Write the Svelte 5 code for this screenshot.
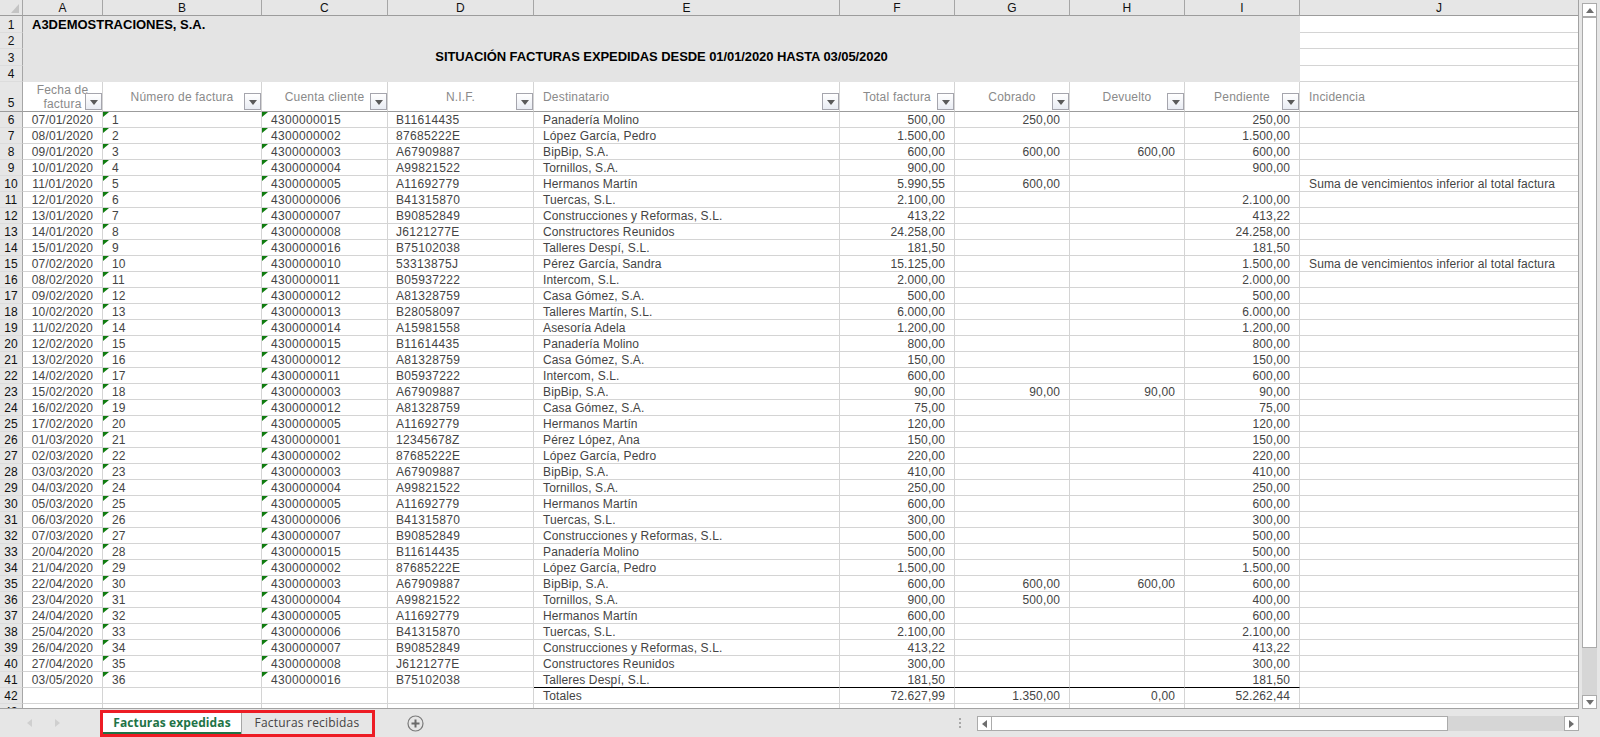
<script>
  const cols = ["A", "B", "C", "D", "E", "F", "G", "H", "I", "J"];
  const widths = [80, 159, 126, 146, 306, 115, 115, 115, 115, 278];
  const aviso = "Suma de vencimientos inferior al total factura";

  // cliente: cuenta, nif, nombre
  const c = {
    molino: ["4300000015", "B11614435", "Panadería Molino"],
    lopez: ["4300000002", "87685222E", "López García, Pedro"],
    bipbip: ["4300000003", "A67909887", "BipBip, S.A."],
    tornillos: ["4300000004", "A99821522", "Tornillos, S.A."],
    hermanos: ["4300000005", "A11692779", "Hermanos Martín"],
    tuercas: ["4300000006", "B41315870", "Tuercas, S.L."],
    reformas: ["4300000007", "B90852849", "Construcciones y Reformas, S.L."],
    reunidos: ["4300000008", "J6121277E", "Constructores Reunidos"],
    despi: ["4300000016", "B75102038", "Talleres Despí, S.L."],
    sandra: ["4300000010", "53313875J", "Pérez García, Sandra"],
    intercom: ["4300000011", "B05937222", "Intercom, S.L."],
    gomez: ["4300000012", "A81328759", "Casa Gómez, S.A."],
    martin: ["4300000013", "B28058097", "Talleres Martín, S.L."],
    adela: ["4300000014", "A15981558", "Asesoría Adela"],
    ana: ["4300000001", "12345678Z", "Pérez López, Ana"],
  };

  // fecha, cliente, total, cobrado, devuelto, pendiente, incidencia
  const facturas = [
    ["07/01/2020", c.molino, "500,00", "250,00", "", "250,00"],
    ["08/01/2020", c.lopez, "1.500,00", "", "", "1.500,00"],
    ["09/01/2020", c.bipbip, "600,00", "600,00", "600,00", "600,00"],
    ["10/01/2020", c.tornillos, "900,00", "", "", "900,00"],
    ["11/01/2020", c.hermanos, "5.990,55", "600,00", "", "", aviso],
    ["12/01/2020", c.tuercas, "2.100,00", "", "", "2.100,00"],
    ["13/01/2020", c.reformas, "413,22", "", "", "413,22"],
    ["14/01/2020", c.reunidos, "24.258,00", "", "", "24.258,00"],
    ["15/01/2020", c.despi, "181,50", "", "", "181,50"],
    ["07/02/2020", c.sandra, "15.125,00", "", "", "1.500,00", aviso],
    ["08/02/2020", c.intercom, "2.000,00", "", "", "2.000,00"],
    ["09/02/2020", c.gomez, "500,00", "", "", "500,00"],
    ["10/02/2020", c.martin, "6.000,00", "", "", "6.000,00"],
    ["11/02/2020", c.adela, "1.200,00", "", "", "1.200,00"],
    ["12/02/2020", c.molino, "800,00", "", "", "800,00"],
    ["13/02/2020", c.gomez, "150,00", "", "", "150,00"],
    ["14/02/2020", c.intercom, "600,00", "", "", "600,00"],
    ["15/02/2020", c.bipbip, "90,00", "90,00", "90,00", "90,00"],
    ["16/02/2020", c.gomez, "75,00", "", "", "75,00"],
    ["17/02/2020", c.hermanos, "120,00", "", "", "120,00"],
    ["01/03/2020", c.ana, "150,00", "", "", "150,00"],
    ["02/03/2020", c.lopez, "220,00", "", "", "220,00"],
    ["03/03/2020", c.bipbip, "410,00", "", "", "410,00"],
    ["04/03/2020", c.tornillos, "250,00", "", "", "250,00"],
    ["05/03/2020", c.hermanos, "600,00", "", "", "600,00"],
    ["06/03/2020", c.tuercas, "300,00", "", "", "300,00"],
    ["07/03/2020", c.reformas, "500,00", "", "", "500,00"],
    ["20/04/2020", c.molino, "500,00", "", "", "500,00"],
    ["21/04/2020", c.lopez, "1.500,00", "", "", "1.500,00"],
    ["22/04/2020", c.bipbip, "600,00", "600,00", "600,00", "600,00"],
    ["23/04/2020", c.tornillos, "900,00", "500,00", "", "400,00"],
    ["24/04/2020", c.hermanos, "600,00", "", "", "600,00"],
    ["25/04/2020", c.tuercas, "2.100,00", "", "", "2.100,00"],
    ["26/04/2020", c.reformas, "413,22", "", "", "413,22"],
    ["27/04/2020", c.reunidos, "300,00", "", "", "300,00"],
    ["03/05/2020", c.despi, "181,50", "", "", "181,50"],
  ];
</script>

{#snippet filtro()}
  <span class="filter"><svg width="8" height="5" viewBox="0 0 8 5"><path d="M0 0h8L4 5z" fill="#5a5a5a" /></svg></span>
{/snippet}

<div class="excel">
  <div class="main">
    <div class="sheet">
      <table>
        <colgroup>
          <col style="width:23px" />
          {#each widths as w}
            <col style="width:{w}px" />
          {/each}
        </colgroup>
        <thead>
          <tr>
            <th class="corner"><svg width="23" height="15" viewBox="0 0 23 15"><path d="M19 4v9h-8z" fill="#c4c4c4" /></svg></th>
            {#each cols as col}
              <th>{col}</th>
            {/each}
          </tr>
        </thead>
        <tbody>
          <tr class="r17">
            <th class="rh">1</th>
            <td colspan="9" class="banner empresa">A3DEMOSTRACIONES, S.A.</td>
            <td></td>
          </tr>
          <tr>
            <th class="rh">2</th>
            <td colspan="9" class="banner"></td>
            <td></td>
          </tr>
          <tr class="r17">
            <th class="rh">3</th>
            <td colspan="9" class="banner titulo">SITUACIÓN FACTURAS EXPEDIDAS DESDE 01/01/2020 HASTA 03/05/2020</td>
            <td></td>
          </tr>
          <tr>
            <th class="rh">4</th>
            <td colspan="9" class="banner"></td>
            <td></td>
          </tr>
          <tr class="cabecera">
            <th class="rh bottom">5</th>
            <td class="center">Fecha de<br />factura{@render filtro()}</td>
            <td class="center">Número de factura{@render filtro()}</td>
            <td class="center">Cuenta cliente{@render filtro()}</td>
            <td class="center">N.I.F.{@render filtro()}</td>
            <td class="left">Destinatario{@render filtro()}</td>
            <td class="center">Total factura{@render filtro()}</td>
            <td class="center">Cobrado{@render filtro()}</td>
            <td class="center">Devuelto{@render filtro()}</td>
            <td class="center">Pendiente{@render filtro()}</td>
            <td class="left">Incidencia</td>
          </tr>
          {#each facturas as f, i}
            {@const last = i === facturas.length - 1}
            <tr>
              <th class="rh">{i + 6}</th>
              <td class="center">{f[0]}</td>
              <td class="left mark">{i + 1}</td>
              <td class="left mark digits">{f[1][0]}</td>
              <td class="left digits nif">{f[1][1]}</td>
              <td class="left" class:line={last}>{f[1][2]}</td>
              <td class="right" class:line={last}>{f[2]}</td>
              <td class="right" class:line={last}>{f[3]}</td>
              <td class="right" class:line={last}>{f[4]}</td>
              <td class="right" class:line={last}>{f[5]}</td>
              <td class="left">{f[6] ?? ""}</td>
            </tr>
          {/each}
          <tr>
            <th class="rh">42</th>
            <td></td><td></td><td></td><td></td>
            <td class="left">Totales</td>
            <td class="right">72.627,99</td>
            <td class="right">1.350,00</td>
            <td class="right">0,00</td>
            <td class="right">52.262,44</td>
            <td></td>
          </tr>
          <tr>
            <th class="rh">43</th>
            {#each cols as _}
              <td></td>
            {/each}
          </tr>
        </tbody>
      </table>
    </div>

    <div class="vscroll">
      <div class="btn up"><svg width="8" height="5" viewBox="0 0 8 5"><path d="M4 0l4 5H0z" fill="#6e6e6e" /></svg></div>
      <div class="track">
        <div class="thumb"></div>
      </div>
      <div class="btn down"><svg width="8" height="5" viewBox="0 0 8 5"><path d="M0 0h8L4 5z" fill="#6e6e6e" /></svg></div>
    </div>
  </div>

  <div class="bar">
    <div class="nav">
      <svg width="5" height="8" viewBox="0 0 5 8"><path d="M5 0v8L0 4z" fill="#cfcfcf" /></svg>
      <svg width="5" height="8" viewBox="0 0 5 8"><path d="M0 0v8l5-4z" fill="#cfcfcf" /></svg>
    </div>
    <div class="tabs">
      <div class="tab active">Facturas expedidas</div>
      <div class="tab">Facturas recibidas</div>
    </div>
    <svg class="add" width="17" height="17" viewBox="0 0 17 17">
      <circle cx="8.5" cy="8.5" r="7.5" fill="none" stroke="#7a7a7a" stroke-width="1.2" />
      <path d="M8.5 4.5v8M4.5 8.5h8" stroke="#6a6a6a" stroke-width="2" />
    </svg>
    <div class="dots"><i></i><i></i><i></i></div>
    <div class="hscroll">
      <div class="btn"><svg width="5" height="8" viewBox="0 0 5 8"><path d="M5 0v8L0 4z" fill="#6e6e6e" /></svg></div>
      <div class="hthumb"></div>
      <div class="htrack"></div>
      <div class="btn"><svg width="5" height="8" viewBox="0 0 5 8"><path d="M0 0v8l5-4z" fill="#6e6e6e" /></svg></div>
    </div>
  </div>
</div>

<style>
  :global(body) {
    margin: 0;
    background: #e6e6e6;
  }

  .excel {
    width: 1600px;
    height: 737px;
    overflow: hidden;
    font-family: "Liberation Sans", Arial, sans-serif;
    font-size: 12px;
    color: #444;
  }

  .main {
    display: flex;
    height: 709px;
  }

  .sheet {
    width: 1579px;
    height: 709px;
    box-sizing: border-box;
    flex: none;
    overflow: hidden;
    background: #fff;
    border-right: 1px solid #a2a2a2;
    border-bottom: 1px solid #a2a2a2;
  }

  table {
    table-layout: fixed;
    width: 1578px;
    border-collapse: separate;
    border-spacing: 0;
  }

  th,
  td {
    padding: 1px 0 0;
    height: 16px;
    line-height: 14px;
    box-sizing: border-box;
    white-space: nowrap;
    overflow: hidden;
    font-weight: normal;
    letter-spacing: 0.13px;
    border-right: 1px solid #d4d4d4;
    border-bottom: 1px solid #d4d4d4;
  }

  td:last-child {
    border-right: 0;
    padding-left: 9px;
  }

  thead th {
    padding-top: 0;
    background: #e6e6e6;
    color: #111;
    text-align: center;
    border-right-color: #a6a6a6;
    border-bottom-color: #9c9c9c;
  }

  thead th:last-child {
    border-right: 0;
  }

  .corner svg {
    display: block;
  }

  .rh {
    background: #e6e6e6;
    color: #111;
    text-align: center;
    letter-spacing: 0;
    border-right-color: #a6a6a6;
    border-bottom-color: #dcdcdc;
  }

  .r17 th,
  .r17 td {
    height: 17px;
    padding-top: 2px;
  }

  .banner {
    background: #e4e4e4;
    color: #000;
    font-weight: bold;
    font-size: 13px;
    letter-spacing: 0;
    border-right: 0;
    border-bottom-color: #e4e4e4;
  }

  .empresa {
    padding-left: 9px;
  }

  .r17 .titulo {
    padding-top: 0;
    text-align: center;
    letter-spacing: -0.08px;
  }

  .cabecera th,
  .cabecera td {
    height: 30px;
    color: #8a8a8a;
    position: relative;
    letter-spacing: 0.2px;
    border-bottom-color: #9c9c9c;
  }

  .cabecera th {
    color: #111;
    letter-spacing: 0;
    padding-bottom: 1px;
  }

  .bottom {
    vertical-align: bottom;
  }

  .center {
    text-align: center;
  }

  .left {
    text-align: left;
    padding-left: 9px;
  }

  .right {
    text-align: right;
    padding-right: 9px;
  }

  .digits {
    letter-spacing: 0.33px;
  }

  .nif {
    padding-left: 8px;
  }

  .mark {
    position: relative;
  }

  .mark::before {
    content: "";
    position: absolute;
    left: 0;
    top: 0;
    width: 6px;
    height: 5px;
    background: #107c10;
    clip-path: polygon(0 0, 100% 0, 0 100%);
  }

  .line {
    border-bottom-color: #000;
  }

  .filter {
    position: absolute;
    right: 0;
    bottom: 1px;
    width: 17px;
    height: 17px;
    box-sizing: border-box;
    display: flex;
    align-items: center;
    justify-content: center;
    background: linear-gradient(#fff, #e9ecf3);
    border: 1px solid #a5a5ad;
  }

  .filter svg {
    margin-top: 1px;
  }

  .vscroll {
    width: 15px;
    margin-left: 3px;
    padding-top: 3px;
    display: flex;
    flex-direction: column;
    height: 706px;
  }

  .btn {
    box-sizing: border-box;
    flex: none;
    width: 15px;
    height: 14px;
    display: flex;
    align-items: center;
    justify-content: center;
    background: #fff;
    border: 1px solid #ababab;
  }

  .track {
    flex: 1;
    background: #d6d6d6;
  }

  .thumb {
    box-sizing: border-box;
    height: 631px;
    background: #fff;
    border: 1px solid #ababab;
  }

  .bar {
    display: flex;
    align-items: flex-start;
    height: 28px;
  }

  .nav {
    box-sizing: border-box;
    width: 100px;
    height: 28px;
    padding-left: 27px;
    display: flex;
    align-items: center;
    gap: 23px;
  }

  .tabs {
    display: flex;
    box-sizing: border-box;
    width: 275px;
    height: 27px;
    margin-top: 1px;
    border: 3px solid #ed1c24;
    font-family: "Open Sans", "Liberation Sans", sans-serif;
  }

  .tab {
    box-sizing: border-box;
    height: 21px;
    line-height: 19px;
    flex: 1;
    text-align: center;
    color: #444;
    letter-spacing: 0.2px;
    border-left: 1px solid #a6a6a6;
  }

  .tab.active {
    flex: none;
    width: 138px;
    background: #fff;
    color: #217346;
    font-weight: bold;
    letter-spacing: 0.1px;
    border-left: 0;
    border-bottom: 2px solid #217346;
  }

  .add {
    margin: 6px 0 0 32px;
    flex: none;
  }

  .dots {
    display: flex;
    flex-direction: column;
    gap: 2px;
    margin: 9px 0 0 535px;
  }

  .dots i {
    display: block;
    width: 2px;
    height: 2px;
    background: #a8a8a8;
  }

  .hscroll {
    display: flex;
    width: 602px;
    height: 15px;
    margin: 7px 0 0 16px;
  }

  .hscroll .btn {
    height: 15px;
    width: 15px;
  }

  .hthumb {
    box-sizing: border-box;
    width: 456px;
    background: #fff;
    border: 1px solid #ababab;
    border-left: 0;
  }

  .htrack {
    flex: 1;
    background: #d6d6d6;
  }
</style>
